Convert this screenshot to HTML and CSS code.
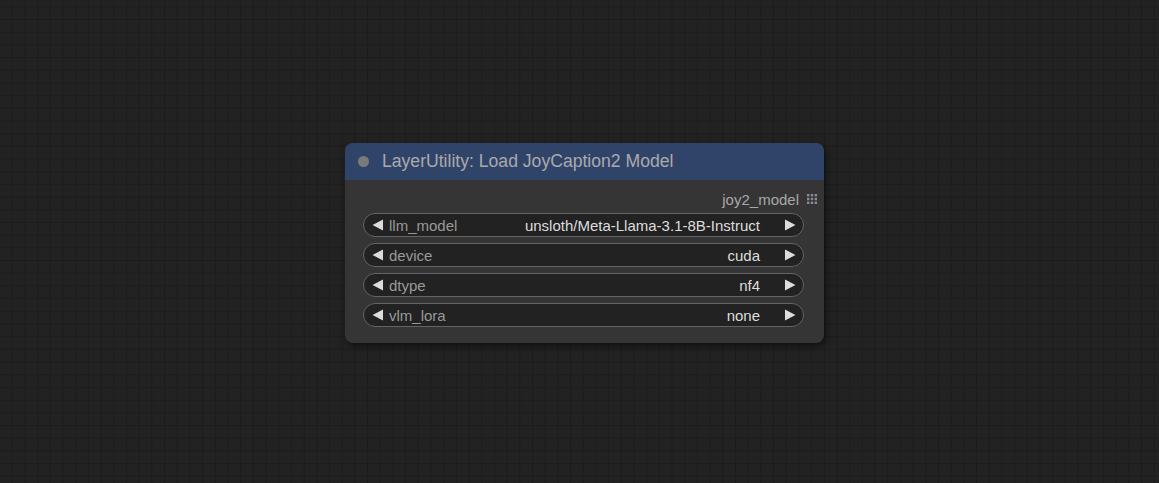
FILE: index.html
```html
<!DOCTYPE html>
<html>
<head>
<meta charset="utf-8">
<link rel="stylesheet" href="styles.css">
</head>
<body>
<div class="canvas">
  <div class="node">
    <div class="title">
      <span class="dot"></span>
      <span class="title-text">LayerUtility: Load JoyCaption2 Model</span>
    </div>
    <div class="body">
      <div class="output">
        <span class="out-label">joy2_model</span>
        <svg class="grid-icon" width="10" height="10" viewBox="0 0 10 10">
          <g fill="#8a8a9a">
            <rect x="0" y="0" width="2.4" height="2.4"/><rect x="3.8" y="0" width="2.4" height="2.4"/><rect x="7.6" y="0" width="2.4" height="2.4"/>
            <rect x="0" y="3.8" width="2.4" height="2.4"/><rect x="3.8" y="3.8" width="2.4" height="2.4"/><rect x="7.6" y="3.8" width="2.4" height="2.4"/>
            <rect x="0" y="7.6" width="2.4" height="2.4"/><rect x="3.8" y="7.6" width="2.4" height="2.4"/><rect x="7.6" y="7.6" width="2.4" height="2.4"/>
          </g>
        </svg>
      </div>
      <div class="widgets">
        <div class="widget">
          <svg class="arrow" width="12" height="12" viewBox="0 0 12 12"><polygon points="11,0.5 11,11.5 0.5,6" fill="#ddd"/></svg>
          <span class="wlabel">llm_model</span>
          <span class="wvalue">unsloth/Meta-Llama-3.1-8B-Instruct</span>
          <svg class="arrow" width="12" height="12" viewBox="0 0 12 12"><polygon points="1,0.5 1,11.5 11.5,6" fill="#ddd"/></svg>
        </div>
        <div class="widget">
          <svg class="arrow" width="12" height="12" viewBox="0 0 12 12"><polygon points="11,0.5 11,11.5 0.5,6" fill="#ddd"/></svg>
          <span class="wlabel">device</span>
          <span class="wvalue">cuda</span>
          <svg class="arrow" width="12" height="12" viewBox="0 0 12 12"><polygon points="1,0.5 1,11.5 11.5,6" fill="#ddd"/></svg>
        </div>
        <div class="widget">
          <svg class="arrow" width="12" height="12" viewBox="0 0 12 12"><polygon points="11,0.5 11,11.5 0.5,6" fill="#ddd"/></svg>
          <span class="wlabel">dtype</span>
          <span class="wvalue">nf4</span>
          <svg class="arrow" width="12" height="12" viewBox="0 0 12 12"><polygon points="1,0.5 1,11.5 11.5,6" fill="#ddd"/></svg>
        </div>
        <div class="widget">
          <svg class="arrow" width="12" height="12" viewBox="0 0 12 12"><polygon points="11,0.5 11,11.5 0.5,6" fill="#ddd"/></svg>
          <span class="wlabel">vlm_lora</span>
          <span class="wvalue">none</span>
          <svg class="arrow" width="12" height="12" viewBox="0 0 12 12"><polygon points="1,0.5 1,11.5 11.5,6" fill="#ddd"/></svg>
        </div>
      </div>
    </div>
  </div>
</div>
</body>
</html>
```

FILE: styles.css
```css
* { box-sizing: border-box; }
html, body {
  margin: 0;
  padding: 0;
  width: 1159px;
  height: 483px;
  overflow: hidden;
}
.canvas {
  width: 1159px;
  height: 483px;
  background-color: #222222;
  background-image:
    linear-gradient(to right, #1c1c1c 0, #1c1c1c 1px, transparent 1px),
    linear-gradient(to bottom, #1c1c1c 0, #1c1c1c 1px, transparent 1px);
  background-size: 12.7px 100%, 100% 12.7px;
  background-position: 11.8px 0, 0 6.3px;
  padding: 143px 0 0 345px;
  font-family: "Liberation Sans", Arial, sans-serif;
}
.node {
  width: 479px;
  border-radius: 8px;
  background: #353535;
  box-shadow: 2px 3px 6px rgba(0,0,0,0.5);
  overflow: hidden;
}
.title {
  height: 37px;
  background: #30446a;
  display: flex;
  align-items: center;
  padding-left: 13px;
}
.dot {
  width: 11px;
  height: 11px;
  border-radius: 50%;
  background: #7a7a7a;
  margin-right: 13px;
}
.title-text {
  color: #aaaaaa;
  font-size: 17.6px;
}
.body {
  padding: 11px 0 16px 0;
}
.output {
  display: flex;
  justify-content: flex-end;
  align-items: center;
  height: 16px;
  padding-right: 7px;
}
.out-label {
  color: #a8a8a8;
  font-size: 15px;
  margin-right: 8px;
}
.grid-icon { display: block; }
.widgets {
  margin-top: 6px;
  padding: 0 20px 0 18px;
  display: flex;
  flex-direction: column;
  gap: 6px;
}
.widget {
  height: 24px;
  border: 1px solid #646464;
  border-radius: 12px;
  background: #222222;
  display: flex;
  align-items: center;
  padding: 0 7px 0 8px;
  font-size: 15px;
}
.arrow { display: block; flex: none; }
.wlabel {
  color: #999999;
  margin-left: 5px;
  flex: none;
}
.wvalue {
  color: #dddddd;
  margin-left: auto;
  margin-right: 24px;
  white-space: nowrap;
}
```
